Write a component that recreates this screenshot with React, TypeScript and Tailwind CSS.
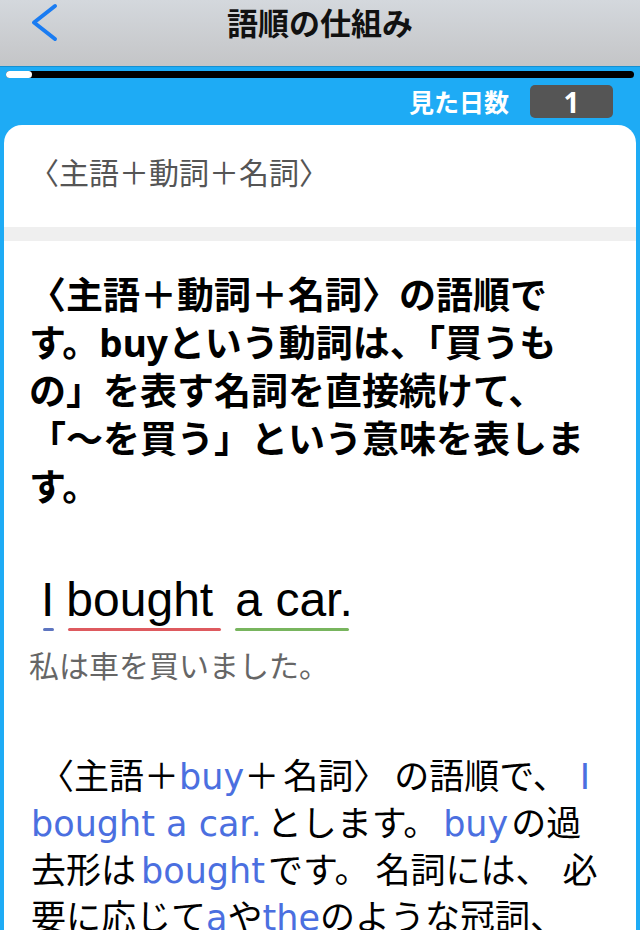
import React from "react";

const Link = ({ children, className = "" }: { children: React.ReactNode; className?: string }) => (
  <span className={`font-['DejaVu_Sans',sans-serif] text-[#4b6fe0] ${className}`}>{children}</span>
);

const Word = ({ text, bar, barW, barMl = 0, className = "" }: { text: string; bar: string; barW: number; barMl?: number; className?: string }) => (
  <div className={`flex flex-col ${className}`}>
    <span className="text-[48px] leading-[56px] text-black font-['Liberation_Sans',sans-serif] whitespace-nowrap">
      {text}
    </span>
    <div
      className={`mt-[0px] h-[3px] rounded-full ${bar}`}
      style={{ width: barW, marginLeft: barMl }}
    />
  </div>
);

export default function App() {
  return (
    <div className="w-[640px] h-[930px] overflow-hidden bg-[#1eabf5] font-['Noto_Sans_CJK_JP',sans-serif]">
      {/* nav bar */}
      <div className="h-[67px] bg-gradient-to-b from-[#d4d8dd] to-[#c4c5c7] border-b border-[#1590d2]">
        <div className="relative h-[44px] flex items-center justify-center">
          <svg className="absolute left-[28px] top-[2px]" width="30" height="40" viewBox="0 0 30 40">
            <path d="M27 4 L6 20.5 L27 37" fill="none" stroke="#1a7cf2" strokeWidth="4" strokeLinecap="round" strokeLinejoin="round" />
          </svg>
          <span className="text-[31px] font-bold text-[#111]">語順の仕組み</span>
        </div>
      </div>

      {/* progress */}
      <div className="mx-[6px] mt-[4px] h-[7px] rounded-full bg-black">
        <div className="w-[26px] h-full rounded-full bg-white" />
      </div>

      {/* days */}
      <div className="mt-[7px] flex justify-end items-center gap-[21px] pr-[27px]">
        <span className="text-[25px] font-bold text-white leading-none">見た日数</span>
        <div className="w-[83px] h-[33px] rounded-[5px] bg-[#555] flex items-center justify-center text-[28px] font-bold text-white font-['Noto_Sans',sans-serif]">
          1
        </div>
      </div>

      {/* card */}
      <div className="mx-[4px] mt-[7px] bg-white rounded-t-[18px]">
        <div className="h-[102px] flex items-center px-[25px] pb-[10px]">
          <span className="text-[30px] text-[#555] leading-none">〈主語＋動詞＋名詞〉</span>
        </div>
        <div className="h-[14px] bg-[#efefef]" />

        <div className="px-[25px] pb-10">
          <div className="pt-[28px] text-[37px] leading-[48px] font-bold text-black whitespace-nowrap">
            <div className="h-[48px]">〈主語＋動詞＋名詞〉の語順で</div>
            <div className="h-[48px]">
              す。<span className="font-['Noto_Sans',sans-serif]">buy</span>という動詞は、「買うも
            </div>
            <div className="h-[48px]">の」を表す名詞を直接続けて、</div>
            <div className="h-[48px]">「〜を買う」という意味を表しま</div>
            <div className="h-[48px]">す。</div>
          </div>

          <div className="mt-[63px] flex items-start pl-[12px]">
            <Word text="I" bar="bg-[#5e75c0]" barW={11} barMl={2} />
            <Word text="bought" bar="bg-[#de5a5f]" barW={153} barMl={2} className="ml-[12px]" />
            <Word text="a car." bar="bg-[#78b55e]" barW={114} className="ml-[14px]" />
          </div>

          <div className="mt-[15px] text-[30px] leading-[36px] text-[#666]">私は車を買いました。</div>

          <div className="mt-[68px] text-[35px] leading-[47px] text-black whitespace-nowrap ml-[2px]">
            <div className="h-[47px] pl-[8px]">
              〈主語＋<Link>buy</Link>＋<span className="ml-[4px]">名詞〉</span>
              <span className="ml-[6px]">の語順で、</span>
              <Link className="ml-[12px]">I</Link>
            </div>
            <div className="h-[47px]">
              <Link>bought a car.</Link>
              <span className="ml-[5px]">とします。</span>
              <Link className="ml-[5px]">buy</Link>
              <span className="ml-[3px]">の過</span>
            </div>
            <div className="h-[47px]">
              去形は<Link className="ml-[5px]">bought</Link>
              <span className="ml-[3px]">です。</span>
              <span className="ml-[6px]">名詞には、</span>
              <span className="ml-[12px]">必</span>
            </div>
            <div className="h-[47px]">
              要に応じて<Link>a</Link>や<Link>the</Link>のような冠詞、
            </div>
            <div className="h-[47px]">所有格などをつけます。</div>
          </div>
        </div>
      </div>
    </div>
  );
}
